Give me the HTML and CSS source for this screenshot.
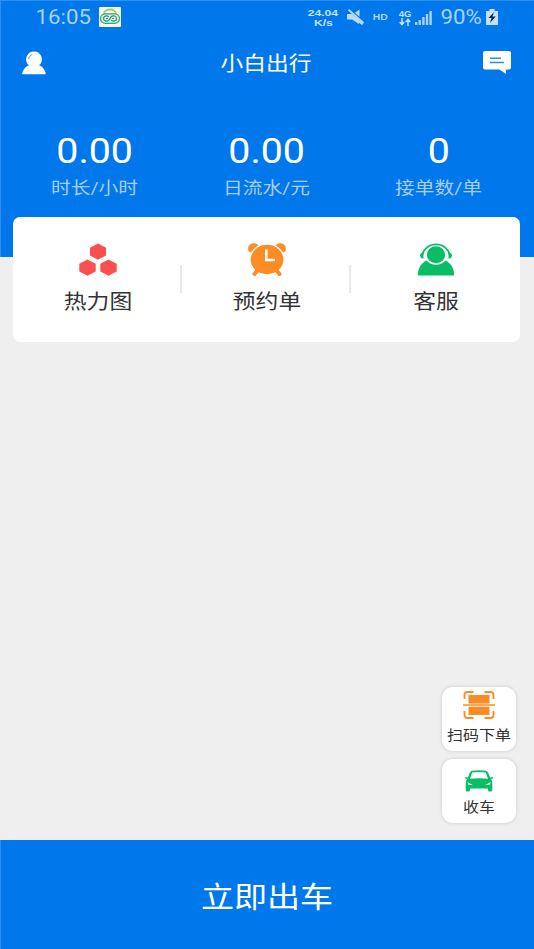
FILE: index.html
```html
<!DOCTYPE html>
<html lang="zh-CN">
<head>
<meta charset="utf-8">
<title>小白出行</title>
<link rel="stylesheet" href="styles.css">
</head>
<body>
<div class="app">
  <header class="hero">
    <div class="status">
      <span class="time"><span class="wide">16:05</span></span>
      <svg class="badge" viewBox="0 0 22 20"><rect width="22" height="20" rx="1" fill="#f3faf5"/><path d="M5 7c0-6 12-6 12 0" fill="none" stroke="#a9c94a" stroke-width="1.8"/><rect x="1.500" y="6.800" width="19" height="9.500" rx="4.700" fill="#d5eee3" stroke="#3da07d" stroke-width="1.200"/><path d="M9.800 10C7.500 8 4.500 9 4.500 11.500s3 3.500 5.500 1.500l2-3c2.200-2.200 5.500-1 5.500 1.500s-3 3.500-5.300 1.500M9 11.500H7M15 11.500h-2" fill="none" stroke="#2f9c78" stroke-width="1.200"/></svg>
      <span class="speed"><span>24.04</span><span>K/s</span></span>
      <svg class="mute" viewBox="0 0 18 16"><path d="M0 5h5l11.500 9.500-1.500 1.500-3-2.300V15L5 10.500H0zM8 3.800L12.500.5v7.300z" fill="#b9dafa"/><path d="M1.500.8L16.500 14" stroke="#b9dafa" stroke-width="1.800"/></svg>
      <span class="hd">HD</span>
      <span class="net"><span>4G</span><svg viewBox="0 0 12 8"><path d="M3 0v6M.7 4L3 6.700 5.300 4M9 8V2M6.700 4L9 1.300 11.300 4" fill="none" stroke="#c6e1fb" stroke-width="1.500"/></svg></span>
      <svg class="signal" viewBox="0 0 17 15"><path d="M0 12h2.400v3H0zM3.600 10H6v5H3.600zM7.200 7h2.400v8H7.200zM10.800 4h2.400v11h-2.400zM14.400 1h2.400v14h-2.400z" fill="#a9d2fa"/></svg>
      <span class="percent"><span class="wide">90%</span></span>
      <svg class="battery" viewBox="0 0 12 16"><path d="M3.500 0h5v2H12v14H0V2h3.500z" fill="#c4e0fb"/><path d="M8 3L2.500 9h3L4 14l5.800-6.500H6.500z" fill="#102c48"/></svg>
    </div>
    <nav class="topbar">
      <svg class="user" viewBox="0 0 24 24"><path d="M12 .5a8 7.800 0 0 1 5 13.800c3.500 1.200 6.500 5 6.800 9H.2c.3-4 3.300-7.800 6.800-9A8 7.800 0 0 1 12 .5z" fill="#fff"/><path d="M6.600 8c.3-2 1.700-3.700 3.700-4.300" fill="none" stroke="#4ba0f0" stroke-width="1"/></svg>
      <h1 class="title"><span class="wide">小白出行</span></h1>
      <svg class="message" viewBox="0 0 28 23"><path d="M2 0h24q2 0 2 2v14.500q0 2-2 2h-3V23l-6.500-4.500H2q-2 0-2-2V2q0-2 2-2z" fill="#fff"/><path d="M7 7.300h11M7 11.500h14" stroke="#2c8eed" stroke-width="1.500"/></svg>
    </nav>
    <div class="stats">
      <div class="stat"><strong class="wide">0.00</strong><span class="wide">时长/小时</span></div>
      <div class="stat"><strong class="wide">0.00</strong><span class="wide">日流水/元</span></div>
      <div class="stat"><strong class="wide">0</strong><span class="wide">接单数/单</span></div>
    </div>
  </header>
  <main class="content">
    <section class="card">
      <a class="entry">
        <svg viewBox="0 0 38 34"><path d="M19 .5l8 4.200v7.800l-8 4.200-8-4.200V4.700zM8.500 16.500l8.200 4.200v7.800l-8.200 4.200-8.200-4.200v-7.800zM29.500 16.500l8.200 4.200v7.800l-8.200 4.200-8.200-4.200v-7.800z" fill="#fc4f50"/></svg>
        <span class="wide">热力图</span>
      </a>
      <a class="entry">
        <svg viewBox="0 0 38 34"><path d="M.5 8C-1.500 2 4.500-1.500 9.500 1.200L10.500 3 2.500 9.500zM37.500 8C39.500 2 33.500-1.500 28.500 1.200L27.500 3l8 6.500z" fill="#fd8c25"/><ellipse cx="19" cy="16.500" rx="17" ry="15.300" fill="#fd8c25" stroke="#fff" stroke-width="1.200"/><path d="M9 28l-2.500 3M29 28l2.500 3" stroke="#fd8c25" stroke-width="4" stroke-linecap="round"/><path d="M18.300 6.500v10.500H27" fill="none" stroke="#fff" stroke-width="2.600"/></svg>
        <span class="wide">预约单</span>
      </a>
      <a class="entry">
        <svg viewBox="0 0 38 34"><g fill="#07bd66"><path d="M.8 32.500c0-7 3.500-12.500 8.500-15 2.700 2.700 6 4.300 9.700 4.300s7-1.600 9.700-4.300c5 2.500 8.500 8 8.500 15z"/><ellipse cx="19" cy="11.800" rx="9.200" ry="8.500"/><path d="M6.500 8.500v7H5q-2-.8-2-3t2-3zM31.500 8.500v7H33q2-.8 2-3t-2-3z"/></g><path d="M5.500 11.500C7.500 4.500 12 1.300 19 1.300s11.500 3.200 13.500 10.200" fill="none" stroke="#07bd66" stroke-width="1.800"/></svg>
        <span class="wide">客服</span>
      </a>
    </section>
    <aside class="tools">
      <button class="tool">
        <svg class="scan" viewBox="0 0 32 28"><path d="M1.500 8V4q0-3 3-3h6M21.500 1h6q3 0 3 3v4M1.500 20v4q0 3 3 3h6M21.500 27h6q3 0 3-3v-4" fill="none" stroke="#fd8c25" stroke-width="1.800"/><path d="M5.500 4h21v8.500h-21zM5.500 15.700h21V24h-21zM0 13.300h32v1.500H0z" fill="#fd8c25"/></svg>
        <span class="wide">扫码下单</span>
      </button>
      <button class="tool">
        <svg class="car" viewBox="0 0 28 22"><path fill-rule="evenodd" d="M7 .8q7-1 14 0 1.500.3 2.200 2l2 5 2.500-1 .3 1.500-2 1q1.300 1.700 1.300 4V20q0 1.500-1.500 1.500h-1.500Q23 21.500 23 20v-1.500H5V20q0 1.500-1.500 1.500H2.200Q.7 21.500.7 20v-6.700q0-2.300 1.300-4l-2-1 .3-1.500 2.500 1 2-5q.7-1.700 2.200-2zM7.200 2.500L5 8.800q9-1.300 18 0L20.800 2.500q-6.800-1-13.600 0zM2.500 12l.5 2.500 5 .7zM25.500 12l-.5 2.500-5 .7z" fill="#07bd66"/></svg>
        <span class="wide">收车</span>
      </button>
    </aside>
  </main>
  <footer class="start"><span class="wide">立即出车</span></footer>
</div>
</body>
</html>
```

FILE: styles.css
```css
* { box-sizing: border-box; }
body {
  margin: 0;
  font-family: Roboto, "Noto Sans CJK SC", sans-serif;
  background: #efefef;
}
svg { display: block; flex: none; }
.wide { display: inline-block; transform: scaleX(1.14); white-space: nowrap; }
.app { display: flex; flex-direction: column; width: 534px; height: 949px; }
.hero {
  height: 257px;
  flex: none;
  background: #0078eb;
  border-top: 1px solid #2c8fee;
  border-left: 1px solid #2c8fee;
  color: #fff;
}
.status { display: flex; align-items: center; height: 32px; padding-left: 35px; color: #a9d3fa; }
.time { width: 55px; text-align: center; font-size: 19.5px; line-height: 32px; padding-top: 1px; }
.badge { width: 22px; height: 20px; margin-left: 8px; }
.speed {
  display: flex; flex-direction: column; align-items: center; gap: 1px;
  width: 32px; margin-left: 186px;
  font: 700 9.5px/9px "Liberation Sans", sans-serif; color: #c6e1fb;
}
.speed span { height: 9px; transform: scaleX(1.28); }
.mute { width: 18px; height: 16px; margin-left: 8px; }
.hd { width: 16px; margin-left: 9px; font: 700 9px/12px "Liberation Sans", sans-serif; transform: scaleX(1.15); }
.net { width: 14px; margin-left: 8px; display: flex; flex-direction: column; align-items: center; font: 700 9.5px/9px "Liberation Sans", sans-serif; color: #c6e1fb; }
.net svg { width: 12px; height: 8px; }
.signal { width: 17px; height: 15px; margin-left: 3px; }
.percent { width: 42px; margin-left: 8px; padding-top: 1px; text-align: center; font-size: 19.5px; }
.battery { width: 12px; height: 16px; margin-left: 4px; }
.topbar { display: flex; align-items: center; justify-content: space-between; height: 60px; padding: 0 23px 0 21px; }
.user { width: 24px; height: 24px; }
.title { margin: 0; padding: 1px 0 0 3px; font-size: 20px; font-weight: 400; line-height: 30px; }
.message { width: 28px; height: 23px; margin-top: -1px; }
.stats { display: grid; grid-template-columns: repeat(3, 172px); padding: 37px 0 0 8px; }
.stat { display: flex; flex-direction: column; align-items: center; }
.stat strong { font-size: 34.5px; font-weight: 400; line-height: 42px; }
.stat span { font-size: 17px; line-height: 24px; margin-top: 4px; color: #a8cdef; transform: scaleX(1.16); }
.content { flex: 1; display: flex; flex-direction: column; justify-content: space-between; align-items: flex-end; }
.card {
  display: grid; grid-template-columns: repeat(3, 1fr);
  align-self: stretch;
  height: 125px; margin: -40px 14px 0 13px; padding-top: 26px;
  border-radius: 7px; background: #fff;
}
.entry { display: flex; flex-direction: column; align-items: center; color: #333; }
.entry:not(:last-child) { background: linear-gradient(#e8e8e8, #e8e8e8) right 22px / 2px 28px no-repeat; }
.entry svg { width: 38px; height: 34px; }
.entry span { margin-top: 11px; font-size: 20px; line-height: 28px; }
.tools { display: flex; flex-direction: column; gap: 8px; padding: 0 18px 17px 0; }
.tool {
  display: flex; flex-direction: column; align-items: center;
  width: 74px; height: 64px; padding: 4px 0 0; border: 0; border-radius: 11px;
  background: #fff; box-shadow: 0 0 3px 1px #d8d8d8;
  color: #333; font-family: inherit; font-size: 14px; line-height: 20px;
}
.scan { width: 32px; height: 28px; }
.tool span { margin-top: 6px; }
.car { width: 28px; height: 22px; margin: 7px 0 0; }
.tool .car + span { margin-top: 5px; }
.start {
  display: flex; align-items: center; justify-content: center;
  flex: none; height: 109px; padding-top: 1px;
  background: #0078eb; border-left: 1px solid #2c8fee;
  color: #fff; font-size: 29px;
}
```
